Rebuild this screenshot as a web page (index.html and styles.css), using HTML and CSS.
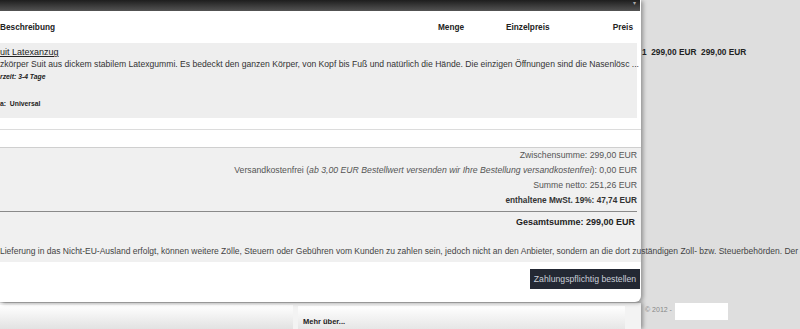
FILE: index.html
```html
<!DOCTYPE html>
<html lang="de">
<head>
	<meta charset="UTF-8" />
	<meta name="viewport" content="width=device-width, initial-scale=1.0" />
	<title>Warenkorb</title>
	<link rel="stylesheet" href="styles.css">
</head>
<body>
    <div class="cart">
        <div class="topbar"><span class="topbar-arrow">▾</span></div>

        <div class="cart-head">
            <div class="col-desc">Beschreibung</div>
            <div class="col-qty">Menge</div>
            <div class="col-unit">Einzelpreis</div>
            <div class="col-price">Preis</div>
        </div>

        <div class="item-wrap">
            <div class="item">
                <div class="item-box">
                    <a class="item-title" href="#">uit Latexanzug</a>
                    <div class="item-text">zkörper Suit aus dickem stabilem Latexgummi. Es bedeckt den ganzen Körper, von Kopf bis Fuß und natürlich die Hände. Die einzigen Öffnungen sind die Nasenlösc ...</div>
                    <div class="item-delivery">rzeit: 3-4 Tage</div>
                    <div class="item-attr">a:&nbsp; Universal</div>
                </div>
                <div class="item-prices">1&nbsp; 299,00 EUR&nbsp; 299,00 EUR</div>
            </div>
        </div>

        <div class="totals">
            <div class="total-line">Zwischensumme: 299,00 EUR</div>
            <div class="total-line">Versandkostenfrei (<em>ab 3,00 EUR Bestellwert versenden wir Ihre Bestellung versandkostenfrei</em>): 0,00 EUR</div>
            <div class="total-line">Summe netto: 251,26 EUR</div>
            <div class="total-line total-tax">enthaltene MwSt. 19%: 47,74 EUR</div>
            <div class="total-sum">Gesamtsumme: 299,00 EUR</div>
            <div class="notice">Lieferung in das Nicht-EU-Ausland erfolgt, können weitere Zölle, Steuern oder Gebühren vom Kunden zu zahlen sein, jedoch nicht an den Anbieter, sondern an die dort zuständigen Zoll- bzw. Steuerbehörden. Der</div>
        </div>

        <div class="actions">
            <button class="order-btn">Zahlungspflichtig bestellen</button>
        </div>
    </div>

    <div class="lower-row">
        <div class="lower">
            <div class="lower-left"></div>
            <div class="more-box">Mehr über...</div>
        </div>
        <div class="copyright">© 2012 -</div>
        <div class="logo-box"></div>
    </div>
</body>
</html>
```

FILE: styles.css
```css
html, body {
    margin: 0;
    padding: 0;
}

body {
    background-color: #dedede;
    font-family: "Liberation Sans", Arial, sans-serif;
    color: #333;
    width: 800px;
    height: 329px;
    overflow: hidden;
}

.cart {
    width: 641px;
    background-color: #ffffff;
    border-bottom-right-radius: 6px;
    box-shadow: 2px 1px 4px rgba(0, 0, 0, 0.35);
    position: relative;
}

.topbar {
    height: 11px;
    width: 640px;
    background: linear-gradient(#1e1e1e, #545454);
    position: relative;
}

.topbar-arrow {
    position: absolute;
    right: 4px;
    top: -1px;
    font-size: 6px;
    color: #aaa;
}

.cart-head {
    display: flex;
    height: 32px;
    align-items: center;
    font-size: 8.25px;
    font-weight: bold;
    color: #222;
}

.col-desc {
    flex: 1;
}

.col-qty {
    width: 28px;
    margin-right: 40px;
}

.col-unit {
    width: 44px;
    margin-right: 60px;
}

.col-price {
    width: 23px;
    text-align: right;
    margin-right: 8px;
}

.item-wrap {
    padding-bottom: 11px;
    border-bottom: 1px solid #dcdcdc;
}

.item {
    display: flex;
}

.item-box {
    flex-shrink: 0;
    width: 637px;
    height: 72px;
    padding-top: 3px;
    background-color: #eeeeee;
}

.item-title {
    display: block;
    font-size: 9px;
    line-height: 12px;
    color: #222;
    text-decoration: underline;
}

.item-text {
    font-size: 8.6px;
    line-height: 13px;
    white-space: nowrap;
    color: #333;
}

.item-delivery {
    font-size: 6.8px;
    line-height: 12px;
    font-weight: bold;
    font-style: italic;
    color: #222;
}

.item-attr {
    margin-top: 15px;
    font-size: 6.8px;
    line-height: 12px;
    font-weight: bold;
    color: #222;
}

.item-prices {
    flex-shrink: 0;
    margin-left: 5px;
    padding-top: 3px;
    line-height: 12px;
    font-size: 8.3px;
    font-weight: bold;
    color: #222;
    white-space: nowrap;
}

.totals {
    margin-top: 17px;
    border-top: 1px solid #cfcfcf;
    background-color: #f0f0f0;
    padding-bottom: 3px;
}

.total-line {
    font-size: 8.7px;
    line-height: 15px;
    text-align: right;
    padding-right: 4px;
    color: #555;
}

.total-tax {
    font-size: 8.25px;
    font-weight: bold;
    color: #333;
    border-bottom: 1px solid #8a8a8a;
    margin-right: 4px;
    padding-right: 0;
    padding-bottom: 3px;
}

.total-sum {
    margin-top: 3px;
    font-size: 9px;
    line-height: 15px;
    font-weight: bold;
    text-align: right;
    padding-right: 6px;
    color: #222;
}

.notice {
    margin-top: 14px;
    font-size: 8.5px;
    line-height: 15px;
    white-space: nowrap;
    color: #444;
}

.actions {
    display: flex;
    justify-content: flex-end;
    padding: 7px 1px 13px 0;
}

.order-btn {
    height: 20px;
    width: 110px;
    padding: 0;
    border: none;
    background-color: #232833;
    color: #c9ced8;
    font-family: "Liberation Sans", Arial, sans-serif;
    font-size: 8.7px;
}

.lower-row {
    display: flex;
    align-items: flex-start;
    margin-top: 1px;
}

.lower {
    display: flex;
    width: 641px;
    height: 26px;
    background-color: #f3f3f3;
    box-shadow: 2px 0 4px rgba(0, 0, 0, 0.35);
}

.lower-left {
    width: 293px;
    height: 24px;
    margin-top: 2px;
    background: linear-gradient(#ffffff, #e2e2e2);
}

.more-box {
    width: 327px;
    height: 23px;
    margin: 3px 0 0 5px;
    padding-left: 5px;
    padding-top: 11px;
    box-sizing: border-box;
    background: linear-gradient(#ffffff, #e6e6e6);
    font-size: 7.5px;
    font-weight: bold;
    color: #222;
}

.copyright {
    margin-left: 4px;
    margin-top: 2px;
    font-size: 7px;
    line-height: 10px;
    color: #888;
}

.logo-box {
    width: 53px;
    height: 17px;
    margin-left: 3px;
    background-color: #ffffff;
}
```
